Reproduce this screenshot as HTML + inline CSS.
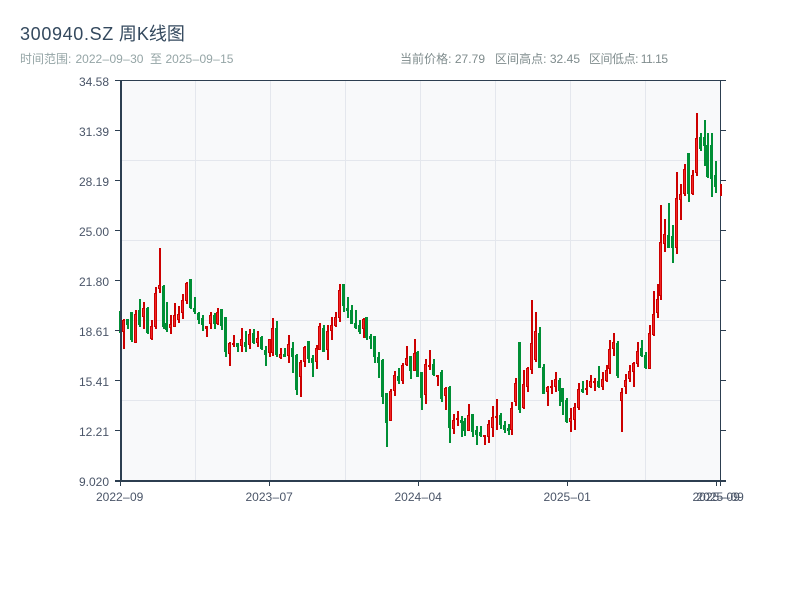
<!DOCTYPE html>
<html lang="zh">
<head>
<meta charset="utf-8">
<title>300940.SZ 周K线图</title>
<style>
html,body{margin:0;padding:0;background:#fff;width:800px;height:600px;overflow:hidden}
svg{display:block}
text{font-family:"Liberation Sans","WenQuanYi Zen Hei","Noto Sans CJK SC",sans-serif}
</style>
</head>
<body>
<svg width="800" height="600" viewBox="0 0 800 600" xmlns="http://www.w3.org/2000/svg">
<rect x="0" y="0" width="800" height="600" fill="#fff"/>
<text x="20" y="40" font-size="18" fill="#34495e"><tspan letter-spacing="0.65">300940.SZ</tspan> 周K线图</text>
<text x="20" y="63" font-size="12" fill="#95a5a6">时间范围: <tspan x="75.5">2022<tspan dx="0.3">–</tspan><tspan dx="0.3">09</tspan><tspan dx="0.3">–</tspan><tspan dx="0.3">30</tspan></tspan><tspan x="150">至</tspan><tspan x="165.5">2025<tspan dx="0.3">–</tspan><tspan dx="0.3">09</tspan><tspan dx="0.3">–</tspan><tspan dx="0.3">15</tspan></tspan></text>
<g font-size="12" fill="#7f8c8d">
<text x="400" y="63" textLength="85" lengthAdjust="spacing">当前价格: 27.79</text>
<text x="495" y="63" textLength="85" lengthAdjust="spacing">区间高点: 32.45</text>
<text x="589" y="63" textLength="79" lengthAdjust="spacing">区间低点: 11.15</text>
</g>

<rect x="120" y="81" width="600" height="400" fill="#f8f9fa"/>
<g shape-rendering="crispEdges">
<path d="M195.5 81V481M270.5 81V481M345.5 81V481M420.5 81V481M495.5 81V481M570.5 81V481M645.5 81V481M120 160.5H720M120 240.5H720M120 320.5H720M120 400.5H720" stroke="#e4e7ed" stroke-width="1" fill="none"/>

<!-- green candles -->
<path fill="none" stroke="#008f35" stroke-width="2" d="M120 311V333M128 319V329M132 312V342M140 299V327M148 307V334M164 285V329M167 302V332M191 279V309M195 297V314M199 312V324M203 315V331M215 313V329M222 309V330M226 317V357M238 343V352M246 331V352M254 329V344M262 336V350M266 346V366M277 321V357M285 348V357M293 342V373M297 354V395M309 341V363M313 355V377M324 325V352M344 284V312M348 297V318M352 305V324M356 310V329M360 320V334M367 317V340M371 334V349M375 336V363M379 352V378M383 359V404M387 393V447M399 368V384M411 356V379M418 351V377M422 372V410M434 359V376M442 370V402M450 386V443M462 416V437M465 418V436M473 414V437M477 426V445M481 426V437M501 413V429M505 421V433M509 424V435M520 342V413M540 327V368M544 364V394M560 378V406M563 388V415M567 398V423M583 381V393M599 366V388M618 341V378M642 340V357M646 352V369M669 203V248M673 225V263M689 153V202M701 133V151M705 120V166M708 133V178M712 133V197M716 161V193"/>
<path fill="none" stroke="#008f35" stroke-width="3" d="M127.5 319V325M131.5 312V340M139.5 310V325M147.5 308V333M163.5 286V327M166.5 323V330M190.5 279V308M194.5 308V312M198.5 313V320M202.5 318V325M214.5 315V324M221.5 309V326M225.5 317V352M237.5 343V347M245.5 342V347M253.5 333V343M261.5 337V349M265.5 350V355M276.5 328V355M284.5 354V357M292.5 348V357M296.5 355V390M308.5 341V359M312.5 358V363M323.5 328V352M343.5 284V306M347.5 308V311M351.5 310V324M355.5 323V328M359.5 325V332M366.5 317V338M370.5 336V339M374.5 336V357M378.5 357V363M382.5 360V397M386.5 393V423M398.5 376V381M410.5 356V371M417.5 352V377M421.5 372V398M433.5 364V375M441.5 372V399M449.5 387V428M461.5 420V423M464.5 421V431M472.5 414V432M476.5 430V435M480.5 432V436M500.5 415V425M504.5 425V430M508.5 428V431M519.5 342V410M539.5 333V368M543.5 367V394M559.5 380V391M562.5 388V402M566.5 400V422M582.5 389V392M598.5 381V387M617.5 343V376M641.5 348V356M645.5 355V368M668.5 235V248M672.5 236V248M688.5 153V194M700.5 137V149M704.5 137V146M707.5 145V177M711.5 145V179M715.5 175V187"/>

<!-- red candles -->
<path fill="none" stroke="#cc0000" stroke-width="2" d="M124 319V349M136 310V343M144 302V329M152 320V340M156 287V329M160 248V293M171 315V334M175 303V327M179 306V323M183 294V319M187 282V304M207 326V337M211 312V329M218 308V325M230 342V366M234 335V347M242 328V352M250 329V349M258 331V347M270 339V357M273 318V356M281 348V359M289 335V363M301 360V397M305 346V367M317 345V369M320 323V350M328 325V360M332 317V340M336 312V327M340 284V322M364 318V338M391 389V421M395 371V396M403 363V384M407 346V366M415 339V371M426 359V404M430 350V370M438 375V386M446 387V410M454 414V434M458 411V426M469 404V431M485 435V445M489 420V443M493 406V437M497 399V430M512 402V435M516 378V406M524 370V409M528 367V392M532 300V374M536 312V362M548 386V406M552 380V394M556 372V392M571 408V432M575 403V430M579 383V410M587 380V395M591 375V388M595 378V391M603 372V390M607 365V382M610 340V374M614 333V356M622 388V432M626 374V394M630 365V382M634 362V387M638 342V367M650 325V369M654 291V336M658 284V318M661 205V300M665 219V252M677 172V254M681 184V220M685 164V196M693 170V195M697 113V176"/>
<path fill="none" stroke="#cc0000" stroke-width="3" d="M123.5 320V332M135.5 314V343M143.5 308V317M151.5 326V339M155.5 293V327M159.5 285V289M170.5 324V328M174.5 315V327M178.5 314V320M182.5 300V313M186.5 283V301M206.5 326V329M210.5 315V324M217.5 312V324M229.5 343V354M233.5 343V345M241.5 339V346M249.5 334V345M257.5 338V343M269.5 339V353M272.5 328V353M280.5 354V358M288.5 344V356M300.5 362V377M304.5 347V362M316.5 348V362M319.5 326V350M327.5 331V350M331.5 325V331M335.5 317V326M339.5 290V318M363.5 319V329M390.5 391V421M394.5 375V391M402.5 365V381M406.5 358V365M414.5 353V371M425.5 364V395M429.5 365V367M437.5 375V377M445.5 388V396M453.5 420V429M457.5 418V420M468.5 415V431M484.5 435V437M488.5 424V437M492.5 417V428M496.5 416V418M511.5 408V430M515.5 383V402M523.5 384V408M527.5 368V387M531.5 343V370M535.5 331V360M547.5 387V392M551.5 386V388M555.5 379V387M570.5 418V422M574.5 407V420M578.5 389V408M586.5 388V390M590.5 381V387M594.5 381V383M602.5 379V387M606.5 370V381M609.5 349V369M613.5 342V349M621.5 392V401M625.5 380V387M629.5 371V379M633.5 363V372M637.5 351V364M649.5 333V369M653.5 314V335M657.5 299V313M660.5 242V296M664.5 234V244M676.5 198V248M680.5 194V200M684.5 169V194M692.5 175V194M696.5 138V173"/>
<path fill="none" stroke="#f02525" stroke-width="1" d="M123.5 321V331M135.5 315V342M143.5 309V316M151.5 327V338M155.5 294V326M159.5 286V288M170.5 325V327M174.5 316V326M178.5 315V319M182.5 301V312M186.5 284V300M210.5 316V323M217.5 313V323M229.5 344V353M241.5 340V345M249.5 335V344M257.5 339V342M269.5 340V352M272.5 329V352M280.5 355V357M288.5 345V355M300.5 363V376M304.5 348V361M316.5 349V361M319.5 327V349M327.5 332V349M331.5 326V330M335.5 318V325M339.5 291V317M363.5 320V328M390.5 392V420M394.5 376V390M402.5 366V380M406.5 359V364M414.5 354V370M425.5 365V394M445.5 389V395M453.5 421V428M468.5 416V430M488.5 425V436M492.5 418V427M511.5 409V429M515.5 384V401M523.5 385V407M527.5 369V386M531.5 344V369M535.5 332V359M547.5 388V391M555.5 380V386M570.5 419V421M574.5 408V419M578.5 390V407M590.5 382V386M602.5 380V386M606.5 371V380M609.5 350V368M613.5 343V348M621.5 393V400M625.5 381V386M629.5 372V378M633.5 364V371M637.5 352V363M649.5 334V368M653.5 315V334M657.5 300V312M660.5 243V295M664.5 235V243M676.5 199V247M680.5 195V199M684.5 170V193M692.5 176V193M696.5 139V172"/>

<!-- axes -->
<path fill="none" stroke="#2c3e50" stroke-width="1" d="M115 80.5H726M720.5 81V481M115 130.5H120M115 180.5H120M115 230.5H120M115 280.5H120M115 330.5H120M115 380.5H120M115 430.5H120M720 130.5H726M720 180.5H726M720 230.5H726M720 280.5H726M720 330.5H726M720 380.5H726M720 430.5H726M120.5 481V486M269.5 481V486M418.5 481V486M567.5 481V486M716.5 481V486M720.5 481V486"/>
<path fill="none" stroke="#2c3e50" stroke-width="2" d="M121 80V482M115 481H726"/>
<rect x="720" y="184" width="2" height="12" fill="#cc0000"/>
</g>

<g font-size="12" fill="#4a5568" text-anchor="end">
<text x="109" y="86">34.58</text>
<text x="109" y="136">31.39</text>
<text x="109" y="186">28.19</text>
<text x="109" y="236">25.00</text>
<text x="109" y="286">21.80</text>
<text x="109" y="336">18.61</text>
<text x="109" y="386">15.41</text>
<text x="109" y="436">12.21</text>
<text x="109" y="486">9.020</text>
</g>
<g font-size="12" fill="#4a5568">
<text x="96" y="501">2022<tspan dx="0.3">–</tspan><tspan dx="0.3">09</tspan></text>
<text x="245.5" y="501">2023<tspan dx="0.3">–</tspan><tspan dx="0.3">07</tspan></text>
<text x="394.5" y="501">2024<tspan dx="0.3">–</tspan><tspan dx="0.3">04</tspan></text>
<text x="543.5" y="501">2025<tspan dx="0.3">–</tspan><tspan dx="0.3">01</tspan></text>
<text x="692.5" y="501">2025<tspan dx="0.3">–</tspan><tspan dx="0.3">09</tspan></text>
<text x="696.5" y="501">2025<tspan dx="0.3">–</tspan><tspan dx="0.3">09</tspan></text>
</g>
</svg>
</body>
</html>
